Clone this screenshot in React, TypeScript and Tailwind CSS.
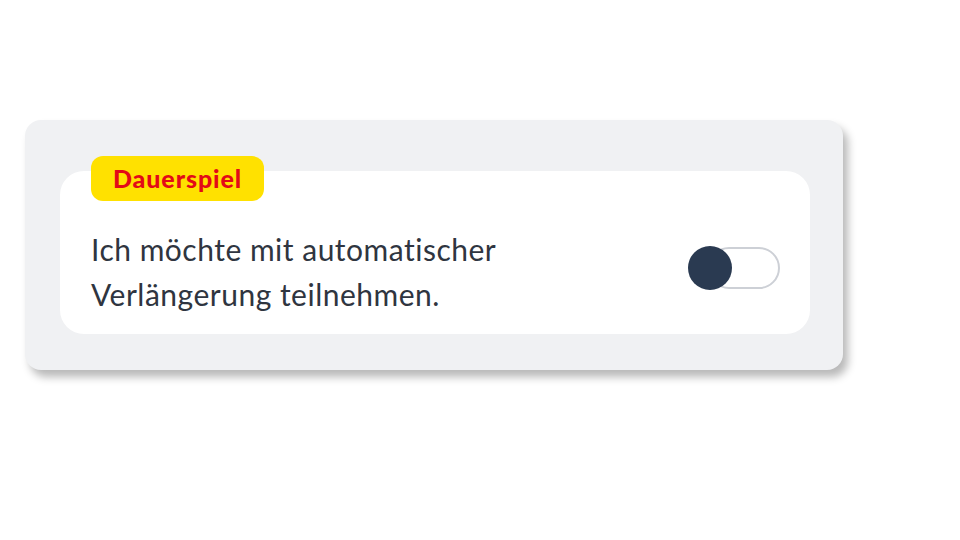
export default function App() {
  return (
    <div className="h-[540px] w-[960px] bg-white pl-[25px] pt-[120px] [font-family:Lato,'Noto_Sans',sans-serif]">
      <section className="flex w-[818px] flex-col rounded-[16px] bg-[#f0f1f3] pb-[36px] pt-[36px] shadow-[5px_7px_8px_rgba(0,0,0,0.28)]">
        <div className="relative z-10 -mb-[30px] ml-[66px] flex h-[45px] w-[173px] items-center justify-center rounded-[12px] bg-[#ffe100]">
          <span className="text-[25px] font-black tracking-[0.9px] text-[#e30a17]">Dauerspiel</span>
        </div>

        <div className="ml-[35px] mr-[33px] flex items-center justify-between rounded-[24px] bg-white pb-[17px] pl-[31px] pr-[30px] pt-[56px]">
          <p className="text-[30px] leading-[45px] tracking-[0.5px] text-[#2f3540]">
            Ich möchte mit automatischer
            <br />
            Verlängerung teilnehmen.
          </p>

          <button
            type="button"
            role="switch"
            aria-checked="false"
            className="relative -mt-[8px] flex h-[42px] w-[92px] items-center"
          >
            <span className="absolute right-0 h-[42px] w-[72px] rounded-full border-2 border-[#cdd0d6] bg-white" />
            <span className="relative h-[44px] w-[44px] rounded-full bg-[#2a3a51]" />
          </button>
        </div>
      </section>
    </div>
  );
}
